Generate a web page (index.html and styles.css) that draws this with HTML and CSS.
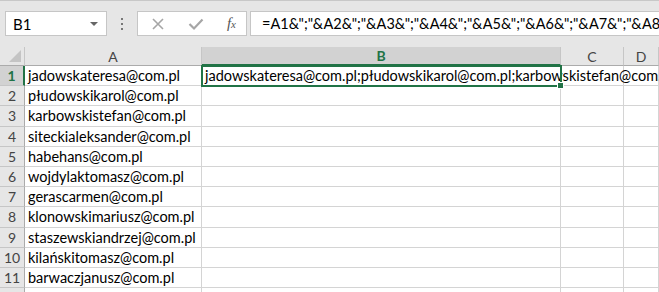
FILE: index.html
```html
<!DOCTYPE html>
<html lang="pl">
<head>
  <meta charset="UTF-8" />
  <title>Arkusz</title>
  <link rel="stylesheet" href="styles.css">
</head>
<body>
  <div class="pasek">
    <div class="nazwa">
      <span>B1</span>
      <span class="strzalka"></span>
    </div>
    <div class="kropki"><i></i><i></i><i></i></div>
    <div class="przyciski">
      <svg class="ikona" width="14" height="14" viewBox="0 0 14 14"><path d="M2 2 L12 12 M12 2 L2 12" stroke="#a6a6a6" stroke-width="1.6" fill="none"/></svg>
      <svg class="ikona" width="16" height="14" viewBox="0 0 16 14"><path d="M1.5 7 L6 11.5 L14.5 2.5" stroke="#a6a6a6" stroke-width="2.2" fill="none"/></svg>
      <span class="fx">f<small>x</small></span>
    </div>
    <div class="formula">=A1&amp;";"&amp;A2&amp;";"&amp;A3&amp;";"&amp;A4&amp;";"&amp;A5&amp;";"&amp;A6&amp;";"&amp;A7&amp;";"&amp;A8&amp;";"&amp;A9&amp;";"&amp;A10&amp;";"&amp;A11</div>
  </div>

  <div class="arkusz">
    <div class="wiersz naglowek">
      <div class="rog"><span class="trojkat"></span></div>
      <div class="kol">A</div>
      <div class="kol aktywna">B</div>
      <div class="kol">C</div>
      <div class="kol">D</div>
    </div>
    <div class="wiersz">
      <div class="nr aktywny">1</div>
      <div class="kom">jadowskateresa@com.pl</div>
      <div class="kom zaznaczona">jadowskateresa@com.pl;płudowskikarol@com.pl;karbowskistefan@com.pl;siteckialeksander@com.pl</div>
      <div class="kom"></div>
      <div class="kom"></div>
    </div>
    <div class="wiersz"><div class="nr">2</div><div class="kom">płudowskikarol@com.pl</div><div class="kom"></div><div class="kom"></div><div class="kom"></div></div>
    <div class="wiersz"><div class="nr">3</div><div class="kom">karbowskistefan@com.pl</div><div class="kom"></div><div class="kom"></div><div class="kom"></div></div>
    <div class="wiersz"><div class="nr">4</div><div class="kom">siteckialeksander@com.pl</div><div class="kom"></div><div class="kom"></div><div class="kom"></div></div>
    <div class="wiersz"><div class="nr">5</div><div class="kom">habehans@com.pl</div><div class="kom"></div><div class="kom"></div><div class="kom"></div></div>
    <div class="wiersz"><div class="nr">6</div><div class="kom">wojdylaktomasz@com.pl</div><div class="kom"></div><div class="kom"></div><div class="kom"></div></div>
    <div class="wiersz"><div class="nr">7</div><div class="kom">gerascarmen@com.pl</div><div class="kom"></div><div class="kom"></div><div class="kom"></div></div>
    <div class="wiersz"><div class="nr">8</div><div class="kom">klonowskimariusz@com.pl</div><div class="kom"></div><div class="kom"></div><div class="kom"></div></div>
    <div class="wiersz"><div class="nr">9</div><div class="kom">staszewskiandrzej@com.pl</div><div class="kom"></div><div class="kom"></div><div class="kom"></div></div>
    <div class="wiersz"><div class="nr">10</div><div class="kom">kilańskitomasz@com.pl</div><div class="kom"></div><div class="kom"></div><div class="kom"></div></div>
    <div class="wiersz"><div class="nr">11</div><div class="kom">barwaczjanusz@com.pl</div><div class="kom"></div><div class="kom"></div><div class="kom"></div></div>
    <div class="wiersz"><div class="nr"></div><div class="kom"></div><div class="kom"></div><div class="kom"></div><div class="kom"></div></div>
  </div>
</body>
</html>
```

FILE: styles.css
```css
body {
  margin: 0;
  width: 659px;
  height: 292px;
  overflow: hidden;
  background: #fff;
  font-family: Lato, "Liberation Sans", sans-serif;
  color: #000;
}

/* pasek formuły */
.pasek {
  height: 47px;
  box-sizing: border-box;
  border-top: 1px solid #c8c8c8;
  background: #e6e6e6;
  display: flex;
  align-items: flex-start;
  padding: 10px 0 0 5px;
  white-space: nowrap;
  overflow: hidden;
}

.nazwa {
  width: 102px;
  height: 25px;
  box-sizing: border-box;
  background: #fff;
  border: 1px solid #c6c6c6;
  display: flex;
  align-items: center;
  justify-content: space-between;
  padding: 0 8px 0 7px;
  font-size: 15px;
}

.strzalka {
  width: 0;
  height: 0;
  border-left: 4px solid transparent;
  border-right: 4px solid transparent;
  border-top: 4px solid #666;
}

.kropki {
  width: 30px;
  height: 25px;
  display: flex;
  flex-direction: column;
  align-items: center;
  justify-content: center;
  gap: 3px;
}

.kropki i {
  width: 2px;
  height: 2px;
  background: #777;
}

.przyciski {
  width: 110px;
  height: 25px;
  box-sizing: border-box;
  background: #fff;
  border: 1px solid #c6c6c6;
  display: flex;
  align-items: center;
  justify-content: space-between;
  padding: 0 10px 0 13px;
}

.fx {
  font-family: "Liberation Serif", serif;
  font-style: italic;
  font-size: 15px;
  color: #555;
}

.fx small {
  font-size: 11px;
}

.formula {
  flex: 1;
  min-width: 0;
  margin-left: 3px;
  height: 25px;
  box-sizing: border-box;
  background: #fff;
  border: 1px solid #c6c6c6;
  border-right: none;
  padding: 3px 0 0 11px;
  font-size: 14.5px;
  overflow: hidden;
}

/* arkusz */
.arkusz {
  font-size: 14.5px;
  overflow: hidden;
}

.wiersz {
  display: grid;
  grid-template-columns: 25px 177px 359px 63px 1fr;
  height: 20.2px;
}

.naglowek {
  height: 19px;
  background: #e6e6e6;
  font-size: 14px;
  color: #444;
}

.rog {
  position: relative;
  border-right: 1px solid #c6c6c6;
  border-bottom: 1px solid #ababab;
}

.trojkat {
  position: absolute;
  right: 3px;
  bottom: 3px;
  width: 0;
  height: 0;
  border-left: 12px solid transparent;
  border-bottom: 12px solid #c4c4c4;
}

.kol {
  display: flex;
  align-items: center;
  justify-content: center;
  border-right: 1px solid #c6c6c6;
  border-bottom: 1px solid #ababab;
}

.kol.aktywna {
  background: #d2d2d2;
  color: #217346;
  font-weight: bold;
  border-bottom: 2px solid #217346;
}

.nr {
  background: #e6e6e6;
  color: #444;
  display: flex;
  align-items: center;
  justify-content: center;
  border-right: 1px solid #ababab;
  border-bottom: 1px solid #c6c6c6;
  font-size: 14px;
}

.nr.aktywny {
  background: #d2d2d2;
  color: #217346;
  font-weight: bold;
  border-right: 2px solid #217346;
}

.kom {
  border-right: 1px solid #d4d4d4;
  border-bottom: 1px solid #d4d4d4;
  padding: 1px 0 0 3px;
  white-space: nowrap;
  line-height: 18px;
}

.kom.zaznaczona {
  position: relative;
  z-index: 2;
  outline: 2px solid #217346;
  outline-offset: -1px;
}

.kom.zaznaczona::after {
  content: "";
  position: absolute;
  right: -4px;
  bottom: -4px;
  width: 5px;
  height: 5px;
  background: #217346;
  border: 1px solid #fff;
}
```
